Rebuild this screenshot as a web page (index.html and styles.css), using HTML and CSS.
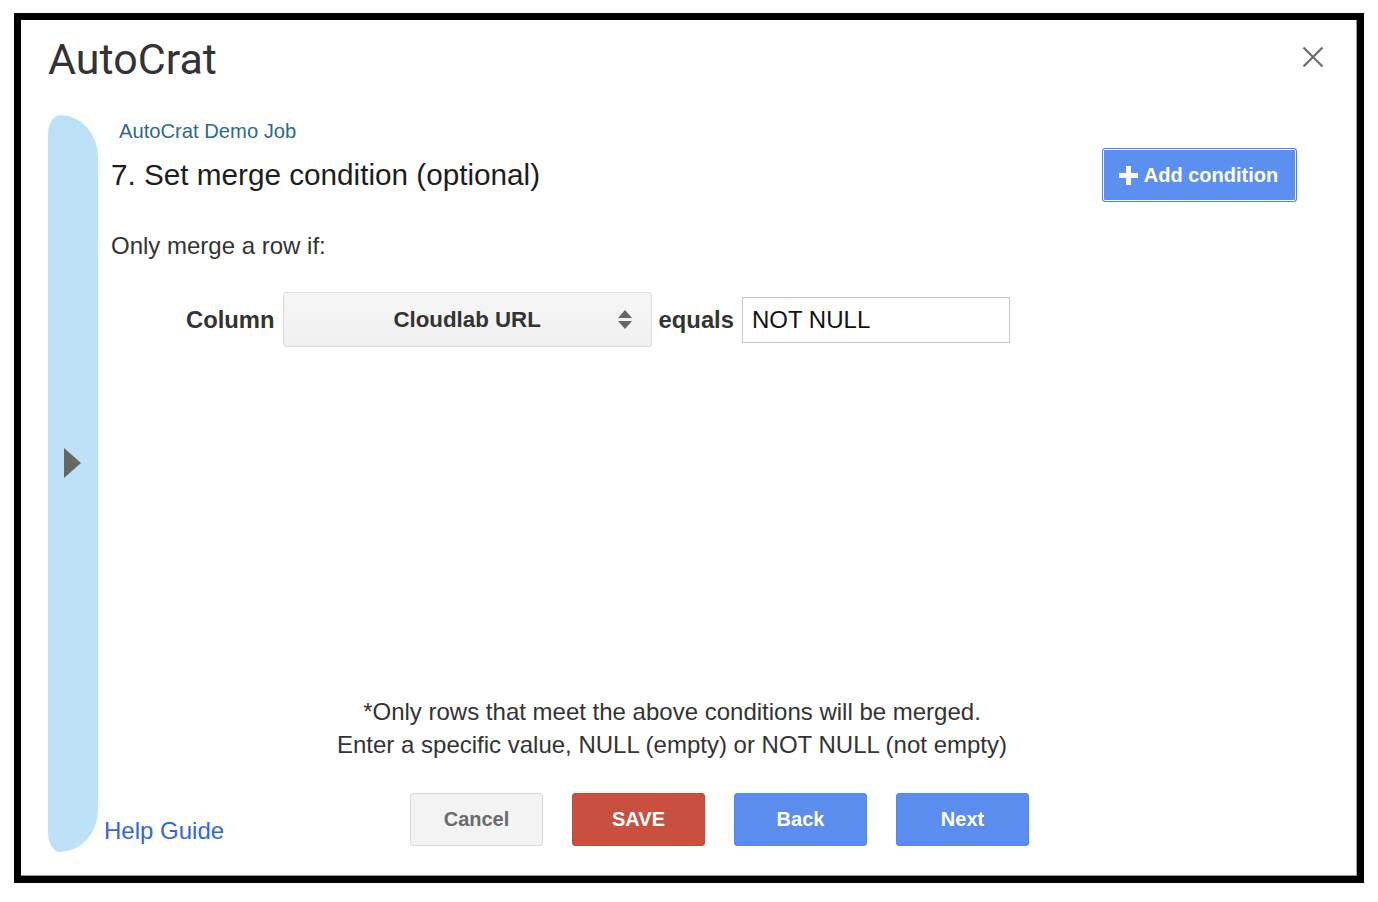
FILE: index.html
```html
<!DOCTYPE html>
<html lang="en">
<head>
<meta charset="utf-8">
<title>AutoCrat</title>
<link rel="stylesheet" href="styles.css">
</head>
<body>
<div class="frame">
  <header class="header">
    <h1 class="app-title">AutoCrat</h1>
    <svg class="close" width="22" height="22" viewBox="0 0 22 22" aria-label="Close">
      <path d="M1.5 1.5L20.5 20.5M20.5 1.5L1.5 20.5" stroke="#6b6b6b" stroke-width="2.2" fill="none"/>
    </svg>
  </header>
  <div class="body">
    <aside class="sidebar"><span class="tri"></span></aside>
    <main class="main">
      <div class="job">AutoCrat Demo Job</div>
      <div class="title-row">
        <h2 class="step">7. Set merge condition (optional)</h2>
        <button class="add-btn">
          <svg width="19" height="19" viewBox="0 0 19 19"><rect x="7" y="0" width="5" height="19" fill="#fff"/><rect x="0" y="7" width="19" height="5" fill="#fff"/></svg>
          <span>Add condition</span>
        </button>
      </div>
      <p class="intro">Only merge a row if:</p>
      <div class="cond-row">
        <span class="lbl">Column</span>
        <div class="select">
          <span>Cloudlab URL</span>
          <svg class="sel-arrows" width="14" height="20" viewBox="0 0 14 20"><path d="M0 8L7 0L14 8Z M0 11L14 11L7 19Z" fill="#666"/></svg>
        </div>
        <span class="lbl">equals</span>
        <div class="input">NOT NULL</div>
      </div>
      <p class="note">*Only rows that meet the above conditions will be merged.<br>Enter a specific value, NULL (empty) or NOT NULL (not empty)</p>
      <div class="footer">
        <a class="help">Help Guide</a>
        <div class="btns">
          <button class="btn cancel">Cancel</button>
          <button class="btn save">SAVE</button>
          <button class="btn blue">Back</button>
          <button class="btn blue">Next</button>
        </div>
      </div>
    </main>
  </div>
</div>
</body>
</html>
```
FILE: styles.css
```css
html, body {
  margin: 0;
  padding: 0;
  background: #fff;
}
body {
  font-family: "Liberation Sans", Arial, sans-serif;
  color: #222;
}
.frame {
  margin: 13px 0 0 14px;
  width: 1350px;
  height: 870px;
  box-sizing: border-box;
  border: 7px solid #000;
  box-shadow: inset -1px -1px 0 #9a9a9a;
  display: flex;
  flex-direction: column;
}
.header {
  display: flex;
  justify-content: space-between;
  align-items: flex-start;
  padding: 14px 33px 0 27px;
}
.app-title {
  margin: 0;
  font-family: Roboto, "Open Sans", sans-serif;
  font-weight: 400;
  font-size: 43px;
  line-height: 50px;
  color: #333;
}
.close {
  margin-top: 12px;
}
.body {
  margin-top: 31px;
  height: 737px;
  display: flex;
  padding-left: 27px;
}
.sidebar {
  width: 50px;
  flex: none;
  background: #bde1f6;
  border-radius: 12px 38px 38px 12px / 20px 42px 42px 20px;
  display: flex;
  align-items: center;
  padding-left: 16px;
  padding-bottom: 41px;
  box-sizing: border-box;
}
.tri {
  width: 0;
  height: 0;
  border-left: 17px solid #666;
  border-top: 15.5px solid transparent;
  border-bottom: 15.5px solid transparent;
}
.main {
  flex: 1;
  margin-left: 6px;
  padding-right: 60px;
  display: flex;
  flex-direction: column;
}
.job {
  margin-top: 5px;
  padding-left: 15px;
  font-size: 20.2px;
  line-height: 22px;
  color: #2b6a8e;
}
.title-row {
  margin-top: 6px;
  height: 54px;
  display: flex;
  align-items: center;
  justify-content: space-between;
  padding-left: 7px;
}
.step {
  margin: 0;
  font-weight: 400;
  font-size: 29.7px;
  line-height: 34px;
  color: #1d1d1d;
}
.add-btn {
  width: 195px;
  height: 54px;
  box-sizing: border-box;
  border: 1px solid #4a86ee;
  border-radius: 3px;
  box-shadow: inset 0 0 0 1px #fff, inset 0 0 0 2px #5a8ef0;
  background: #5b8ff0;
  color: #fff;
  font-family: "Liberation Sans", Arial, sans-serif;
  font-weight: 700;
  font-size: 20px;
  display: flex;
  align-items: center;
  justify-content: center;
  gap: 6px;
  padding: 0 2px 0 0;
}
.intro {
  margin: 31px 0 0;
  padding-left: 7px;
  font-size: 24px;
  line-height: 26px;
  color: #333;
}
.cond-row {
  margin-top: 33px;
  padding-left: 82px;
  display: flex;
  align-items: center;
}
.lbl {
  font-weight: 700;
  font-size: 23.8px;
  color: #333;
}
.select {
  position: relative;
  margin: 0 7px 0 8px;
  width: 369px;
  height: 55px;
  box-sizing: border-box;
  border: 1px solid #dcdcdc;
  border-radius: 3px;
  background: linear-gradient(#f6f6f6, #f0f0f0);
  display: flex;
  align-items: center;
  justify-content: center;
  font-weight: 700;
  font-size: 22.3px;
  color: #333;
}
.sel-arrows {
  position: absolute;
  right: 19px;
  top: 17px;
}
.input {
  margin-left: 8px;
  width: 268px;
  height: 46px;
  box-sizing: border-box;
  border: 1px solid #c9c9c9;
  box-shadow: inset 0 1px 1px rgba(0,0,0,0.06);
  padding-left: 9px;
  display: flex;
  align-items: center;
  font-size: 24px;
  color: #111;
}
.note {
  margin: auto 0 0;
  padding-right: 57px;
  text-align: center;
  font-size: 24px;
  line-height: 33px;
  color: #333;
}
.footer {
  margin: 32px 0 6px;
  display: flex;
  align-items: flex-end;
}
.help {
  width: 306px;
  flex: none;
  font-size: 24px;
  line-height: 28px;
  margin-bottom: 1px;
  color: #3367d6;
}
.btns {
  display: flex;
  gap: 29px;
}
.btn {
  width: 133px;
  height: 53px;
  box-sizing: border-box;
  border-radius: 3px;
  font-family: "Liberation Sans", Arial, sans-serif;
  font-weight: 700;
  font-size: 20px;
  padding: 0;
}
.cancel {
  background: #f3f3f3;
  border: 1px solid #dadada;
  color: #6a6a6a;
}
.save {
  background: #c9503f;
  border: 1px solid #c24a3a;
  color: #fff;
}
.blue {
  background: #5a8dee;
  border: 1px solid #5387ea;
  color: #fff;
}
```
